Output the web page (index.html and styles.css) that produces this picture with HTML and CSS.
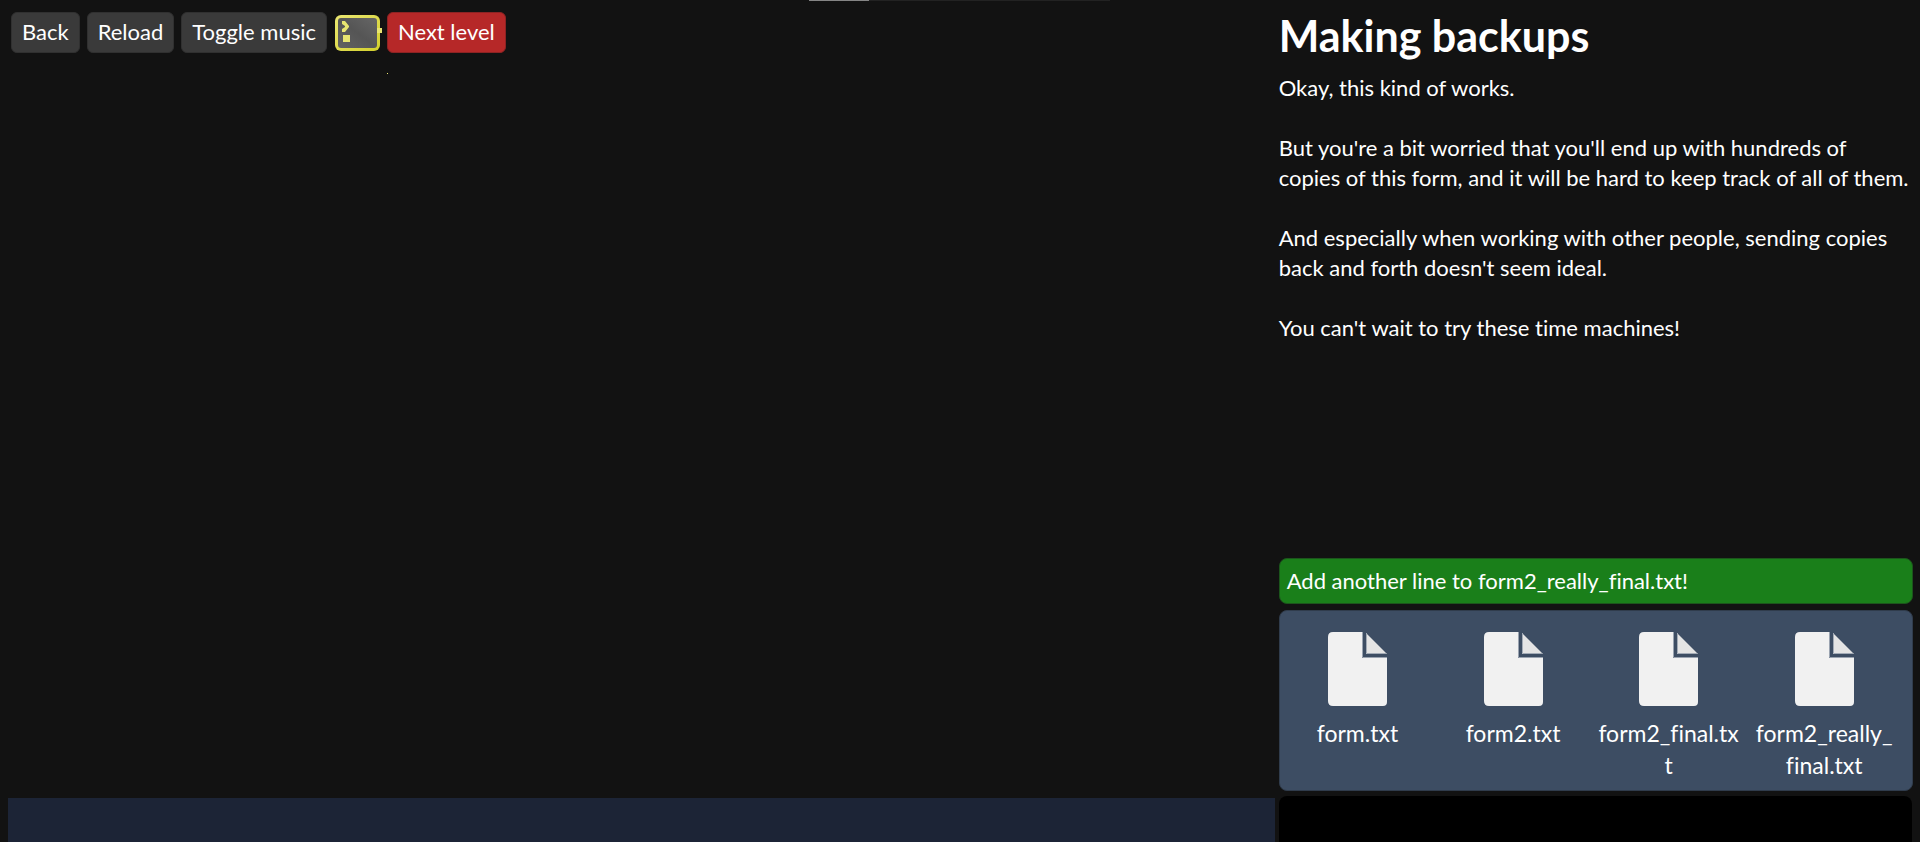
FILE: index.html
```
<!DOCTYPE html>
<html lang="en">
<head>
<meta charset="utf-8">
<title>Making backups</title>
<link rel="stylesheet" href="styles.css">
</head>
<body>
<svg class="defs" aria-hidden="true">
  <symbol id="file" viewBox="0 0 59 74">
    <path fill="#f1f1f1" d="M5 0H34V26H59V70Q59 74 55 74H5Q0 74 0 69V5Q0 0 5 0Z"/>
    <path fill="none" stroke="#9aa3b0" d="M34.500 0V25.500H59"/>
    <path fill="#e4e4e4" d="M38 1L59 22H38Z"/>
    <path fill="none" stroke="#a3abb6" d="M38.500 1V21.500H58"/>
  </symbol>
</svg>
<div class="progress"><div class="progress-value"></div></div>
<div class="game">
  <main class="board">
    <nav class="toolbar">
      <button class="button">Back</button>
      <button class="button">Reload</button>
      <button class="button">Toggle music</button>
      <button class="cli" aria-label="Command line">
        <svg class="cli-icon" viewBox="0 0 45 36">
          <defs>
            <linearGradient id="edge" x2="1" y2="1"><stop stop-color="#ebe772"/><stop offset="1" stop-color="#d2cf2c"/></linearGradient>
            <linearGradient id="face" y1="1" x2="1" y2="0"><stop stop-color="#626262"/><stop offset=".5" stop-color="#555"/><stop offset="1" stop-color="#666"/></linearGradient>
          </defs>
          <rect width="45" height="36" rx="6" fill="url(#edge)"/>
          <rect x="3" y="3" width="39" height="30" rx="3" fill="url(#face)"/>
          <path fill="#e8e570" d="M42 13h5v5h-5zM8 20h7v7H8zM7 6h3l4 5v1l-4 5H7v-3l3-2v-1L7 9zM52 58h1v1h-1z"/>
        </svg>
      </button>
      <button class="button button-next">Next level</button>
    </nav>
    <section class="cards" aria-label="Cards"></section>
  </main>
  <aside class="sidebar">
    <div class="story">
      <h1>Making backups</h1>
      <p>Okay, this kind of works.</p>
      <p>But you're a bit worried that you'll end up with hundreds of<br>copies of this form, and it will be hard to keep track of all of them.</p>
      <p>And especially when working with other people, sending copies<br>back and forth doesn't seem ideal.</p>
      <p>You can't wait to try these time machines!</p>
    </div>
    <div class="goal">Add another line to form2_really_final.txt!</div>
    <div class="files">
      <div class="file"><svg class="file-icon"><use href="#file"/></svg><span>form.txt</span></div>
      <div class="file"><svg class="file-icon"><use href="#file"/></svg><span>form2.txt</span></div>
      <div class="file"><svg class="file-icon"><use href="#file"/></svg><span>form2_final.tx<br>t</span></div>
      <div class="file"><svg class="file-icon"><use href="#file"/></svg><span>form2_really_<br>final.txt</span></div>
    </div>
    <div class="terminal"></div>
  </aside>
</div>
</body>
</html>
```
FILE: styles.css
```
* { box-sizing: border-box; }
body {
  margin: 0;
  background: #121212;
  color: #fff;
  font-family: Lato, sans-serif;
  font-size: 22px;
  font-variant-ligatures: none;
  line-height: 30px;
}
.defs { position: absolute; width: 0; height: 0; }
.progress {
  position: absolute;
  top: 0;
  left: 50%;
  width: 301px;
  height: 1px;
  margin-left: -151px;
  background: #222;
}
.progress-value { width: 20%; height: 100%; background: #858585; }
.game {
  display: grid;
  grid-template-columns: 2fr 1fr;
  gap: 4px;
  height: 100vh;
  padding: 0 8px;
  overflow: hidden;
}
.board, .sidebar { display: flex; flex-direction: column; min-width: 0; }
.sidebar { margin-right: -1px; }
.toolbar { display: flex; flex: 1; align-items: flex-start; gap: 7px; padding: 12px 3px; }
.button {
  height: 41px;
  padding: 0 10px 1px;
  border: 1px solid #303030;
  border-radius: 6px;
  background: #3a3a3a;
  color: #fff;
  font: inherit;
}
.button-next { border-color: #8d2323; background: #b62828; }
.cli { padding: 3px 0 0 1px; border: 0; background: none; }
.cli-icon { display: block; width: 45px; height: 36px; overflow: visible; }
.cards { height: 44px; background: #1c2436; }
.story { flex: 1; padding: 11px 0 0; white-space: nowrap; }
h1 { margin: 0 0 12px; font-size: 43px; line-height: 50px; font-weight: 700; }
p { margin: 0 0 30px; }
.goal {
  padding: 7px;
  border: 1px solid #1c551c;
  border-radius: 8px;
  background: #1a7f1a;
}
.files {
  display: grid;
  grid-template-columns: repeat(4, 1fr);
  height: 181px;
  margin: 6px 0 5px;
  padding: 21px 10px 0 0;
  border: 1px solid #303c4c;
  border-radius: 8px;
  background: #3d4d63;
  font-size: 23px;
}
.file { display: flex; flex-direction: column; align-items: center; gap: 11px; line-height: 32px; text-align: center; }
.file-icon { width: 59px; height: 74px; }
.terminal { height: 46px; margin-right: 1px; border-radius: 8px 8px 0 0; background: #000; }
```
